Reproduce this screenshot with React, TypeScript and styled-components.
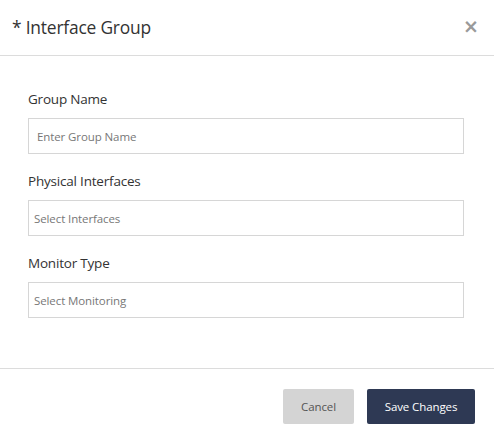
import React from "react";
import styled, { createGlobalStyle } from "styled-components";

const GlobalStyle = createGlobalStyle`
  html, body {
    margin: 0;
    padding: 0;
    background: #ffffff;
  }
  body {
    font-family: "Open Sans", "Noto Sans", "Liberation Sans", sans-serif;
  }
  * {
    box-sizing: border-box;
  }
`;

const fields: Array<{ label: string; placeholder: string; kind: "input" | "select" }> = [
  { label: "Group Name", placeholder: "Enter Group Name", kind: "input" },
  { label: "Physical Interfaces", placeholder: "Select Interfaces", kind: "select" },
  { label: "Monitor Type", placeholder: "Select Monitoring", kind: "select" },
];

export default function App() {
  return (
    <>
      <GlobalStyle />
      <Modal>
        <Header>
          <Title>* Interface Group</Title>
          <CloseBtn aria-label="Close">×</CloseBtn>
        </Header>
        <Body>
          {fields.map((f) => (
            <Field key={f.label}>
              <Label>{f.label}</Label>
              <Control $inset={f.kind === "input" ? 8 : 5}>
                <Placeholder>{f.placeholder}</Placeholder>
              </Control>
            </Field>
          ))}
        </Body>
        <Footer>
          <Button $variant="cancel">Cancel</Button>
          <Button $variant="primary">Save Changes</Button>
        </Footer>
      </Modal>
    </>
  );
}

const Modal = styled.div`
  width: 494px;
  height: 443px;
  display: flex;
  flex-direction: column;
  background: #fff;
  color: #333;
`;

const Header = styled.div`
  height: 56px;
  display: flex;
  align-items: center;
  justify-content: space-between;
  padding: 0 15px 2px 12px;
  border-bottom: 1px solid #dcdcdc;
`;

const Title = styled.h4`
  margin: 0;
  font-size: 17.4px;
  font-weight: 400;
  color: #333;
  letter-spacing: -0.2px;
`;

const CloseBtn = styled.button`
  border: 0;
  background: transparent;
  padding: 0;
  font-family: "DejaVu Sans", sans-serif;
  font-size: 19px;
  font-weight: 700;
  line-height: 1;
  color: #9a9a9a;
  cursor: pointer;
`;

const Body = styled.div`
  flex: 1;
  display: flex;
  flex-direction: column;
  gap: 17px;
  padding: 33px 30px 0 28px;
  border-bottom: 1px solid #dcdcdc;
`;

const Field = styled.div`
  display: flex;
  flex-direction: column;
  gap: 9px;
`;

const Label = styled.label`
  font-size: 13.5px;
  line-height: 20px;
  color: #333;
  letter-spacing: -0.2px;
`;

const Control = styled.div<{ $inset: number }>`
  height: 36px;
  display: flex;
  align-items: center;
  padding-left: ${(p) => p.$inset}px;
  border: 1px solid #d6d6d6;
  background: #fff;
`;

const Placeholder = styled.span`
  font-size: 11.5px;
  color: #777;
  letter-spacing: -0.1px;
`;

const Footer = styled.div`
  height: 74px;
  display: flex;
  justify-content: flex-end;
  align-items: flex-start;
  gap: 13px;
  padding: 20px 19px 0 0;
`;

const Button = styled.button<{ $variant: "cancel" | "primary" }>`
  height: 35px;
  border: 0;
  border-radius: 2px;
  padding: 0 16px;
  font-family: inherit;
  font-size: 11.5px;
  letter-spacing: -0.1px;
  background: ${(p) => (p.$variant === "primary" ? "#2e3954" : "#d4d4d4")};
  color: ${(p) => (p.$variant === "primary" ? "#ffffff" : "#555555")};
  min-width: ${(p) => (p.$variant === "primary" ? "108px" : "71px")};
`;
